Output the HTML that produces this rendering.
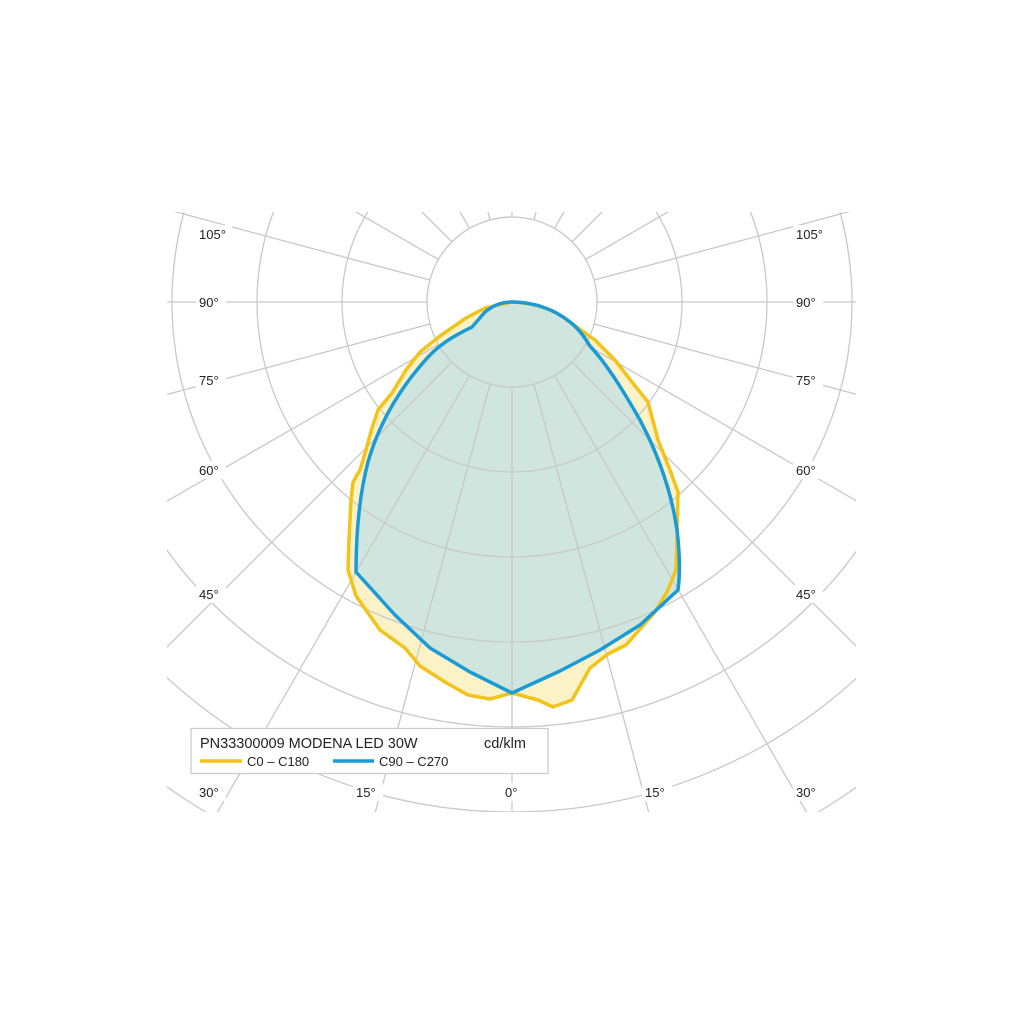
<!DOCTYPE html>
<html><head><meta charset="utf-8"><style>
html,body{margin:0;padding:0;background:#fff;width:1024px;height:1024px;overflow:hidden}
svg{display:block}
text{font-family:"Liberation Sans",sans-serif;fill:#222}
</style></head><body>
<svg width="1024" height="1024" viewBox="0 0 1024 1024" xmlns="http://www.w3.org/2000/svg">
<defs><clipPath id="c"><rect x="167" y="212" width="689" height="600"/></clipPath></defs>
<g clip-path="url(#c)">
<path d="M512,302 C530,303 545,306 560,315 L595,340 L615,360 L632,382 L648,402 L658,440 L670,470 L678,492 L677,540 L676,570 L668,590 L655,612 L626,645 L608,654 L590,668 L572,700 L553,707 L538,700 L512,693 L490,699 L468,695 L445,682 L420,666 L405,648 L380,630 L356,596 L348,570 L349,540 L351,500 L353,482 L360,470 L366,450 L372,428 L378,410 L392,393 L406,370 L420,352 L440,336 L466,318 L485,308 Z" fill="#fcf2c8" stroke="none"/>
<path d="M512,302 C535,302 555,310 570,322 C580,330 585,338 590,346 C605,362 620,385 640,420 C660,458 672,495 677,530 C680,555 680,575 678,590 L640,625 L600,650 L560,671 L512,693 L470,672 L430,648 L395,615 L356,572 C356,540 358,500 368,462 C380,420 402,385 430,355 C445,340 460,333 472,327 L485,312 C495,304 503,302 512,302 Z" fill="#cfe5dd" stroke="none"/>
<g fill="none" stroke="#c8c8c8" stroke-width="1.3">
<circle cx="512" cy="302" r="85"/><circle cx="512" cy="302" r="170"/><circle cx="512" cy="302" r="255"/><circle cx="512" cy="302" r="340"/><circle cx="512" cy="302" r="425"/><circle cx="512" cy="302" r="510"/><circle cx="512" cy="302" r="595"/>
<g id="r">
<line x1="512" y1="387" x2="512" y2="1000"/>
<line x1="512" y1="387" x2="512" y2="1000" transform="rotate(15 512 302)"/>
<line x1="512" y1="387" x2="512" y2="1000" transform="rotate(30 512 302)"/>
<line x1="512" y1="387" x2="512" y2="1000" transform="rotate(45 512 302)"/>
<line x1="512" y1="387" x2="512" y2="1000" transform="rotate(60 512 302)"/>
<line x1="512" y1="387" x2="512" y2="1000" transform="rotate(75 512 302)"/>
<line x1="512" y1="387" x2="512" y2="1000" transform="rotate(90 512 302)"/>
<line x1="512" y1="387" x2="512" y2="1000" transform="rotate(105 512 302)"/>
<line x1="512" y1="387" x2="512" y2="1000" transform="rotate(120 512 302)"/>
<line x1="512" y1="387" x2="512" y2="1000" transform="rotate(135 512 302)"/>
<line x1="512" y1="387" x2="512" y2="1000" transform="rotate(150 512 302)"/>
<line x1="512" y1="387" x2="512" y2="1000" transform="rotate(165 512 302)"/>
<line x1="512" y1="387" x2="512" y2="1000" transform="rotate(180 512 302)"/>
<line x1="512" y1="387" x2="512" y2="1000" transform="rotate(195 512 302)"/>
<line x1="512" y1="387" x2="512" y2="1000" transform="rotate(210 512 302)"/>
<line x1="512" y1="387" x2="512" y2="1000" transform="rotate(225 512 302)"/>
<line x1="512" y1="387" x2="512" y2="1000" transform="rotate(240 512 302)"/>
<line x1="512" y1="387" x2="512" y2="1000" transform="rotate(255 512 302)"/>
<line x1="512" y1="387" x2="512" y2="1000" transform="rotate(270 512 302)"/>
<line x1="512" y1="387" x2="512" y2="1000" transform="rotate(285 512 302)"/>
<line x1="512" y1="387" x2="512" y2="1000" transform="rotate(300 512 302)"/>
<line x1="512" y1="387" x2="512" y2="1000" transform="rotate(315 512 302)"/>
<line x1="512" y1="387" x2="512" y2="1000" transform="rotate(330 512 302)"/>
<line x1="512" y1="387" x2="512" y2="1000" transform="rotate(345 512 302)"/>
</g>
</g>
<path d="M512,302 C530,303 545,306 560,315 L595,340 L615,360 L632,382 L648,402 L658,440 L670,470 L678,492 L677,540 L676,570 L668,590 L655,612 L626,645 L608,654 L590,668 L572,700 L553,707 L538,700 L512,693 L490,699 L468,695 L445,682 L420,666 L405,648 L380,630 L356,596 L348,570 L349,540 L351,500 L353,482 L360,470 L366,450 L372,428 L378,410 L392,393 L406,370 L420,352 L440,336 L466,318 L485,308 Z" fill="none" stroke="#f2c31a" stroke-width="3.5" stroke-linejoin="round"/>
<path d="M512,302 C535,302 555,310 570,322 C580,330 585,338 590,346 C605,362 620,385 640,420 C660,458 672,495 677,530 C680,555 680,575 678,590 L640,625 L600,650 L560,671 L512,693 L470,672 L430,648 L395,615 L356,572 C356,540 358,500 368,462 C380,420 402,385 430,355 C445,340 460,333 472,327 L485,312 C495,304 503,302 512,302 Z" fill="none" stroke="#1a9bd6" stroke-width="3.5" stroke-linejoin="round"/>
<g font-size="13">
<rect x="196" y="225" width="36" height="18" fill="#fff"/><text x="199" y="239">105°</text>
<rect x="196" y="293" width="30" height="18" fill="#fff"/><text x="199" y="307">90°</text>
<rect x="196" y="371" width="30" height="18" fill="#fff"/><text x="199" y="385">75°</text>
<rect x="196" y="461" width="30" height="18" fill="#fff"/><text x="199" y="475">60°</text>
<rect x="196" y="585" width="30" height="18" fill="#fff"/><text x="199" y="599">45°</text>
<rect x="196" y="783" width="30" height="18" fill="#fff"/><text x="199" y="797">30°</text>
<rect x="353" y="783" width="30" height="18" fill="#fff"/><text x="356" y="797">15°</text>
<rect x="503" y="783" width="22" height="18" fill="#fff"/><text x="505" y="797">0°</text>
<rect x="642" y="783" width="30" height="18" fill="#fff"/><text x="645" y="797">15°</text>
<rect x="793" y="783" width="30" height="18" fill="#fff"/><text x="796" y="797">30°</text>
<rect x="793" y="225" width="36" height="18" fill="#fff"/><text x="796" y="239">105°</text>
<rect x="793" y="293" width="30" height="18" fill="#fff"/><text x="796" y="307">90°</text>
<rect x="793" y="371" width="30" height="18" fill="#fff"/><text x="796" y="385">75°</text>
<rect x="793" y="461" width="30" height="18" fill="#fff"/><text x="796" y="475">60°</text>
<rect x="793" y="585" width="30" height="18" fill="#fff"/><text x="796" y="599">45°</text>
</g>
</g>
<rect x="191" y="728.5" width="357" height="45" fill="#fff" stroke="#ccc" stroke-width="1.3"/>
<text x="200" y="748" font-size="14.5">PN33300009 MODENA LED 30W</text>
<text x="484" y="748" font-size="14.5">cd/klm</text>
<line x1="200" y1="761" x2="242" y2="761" stroke="#f2c31a" stroke-width="3.5"/>
<text x="247" y="766" font-size="13">C0 – C180</text>
<line x1="333" y1="761" x2="374" y2="761" stroke="#1a9bd6" stroke-width="3.5"/>
<text x="379" y="766" font-size="13">C90 – C270</text>
</svg>
</body></html>
